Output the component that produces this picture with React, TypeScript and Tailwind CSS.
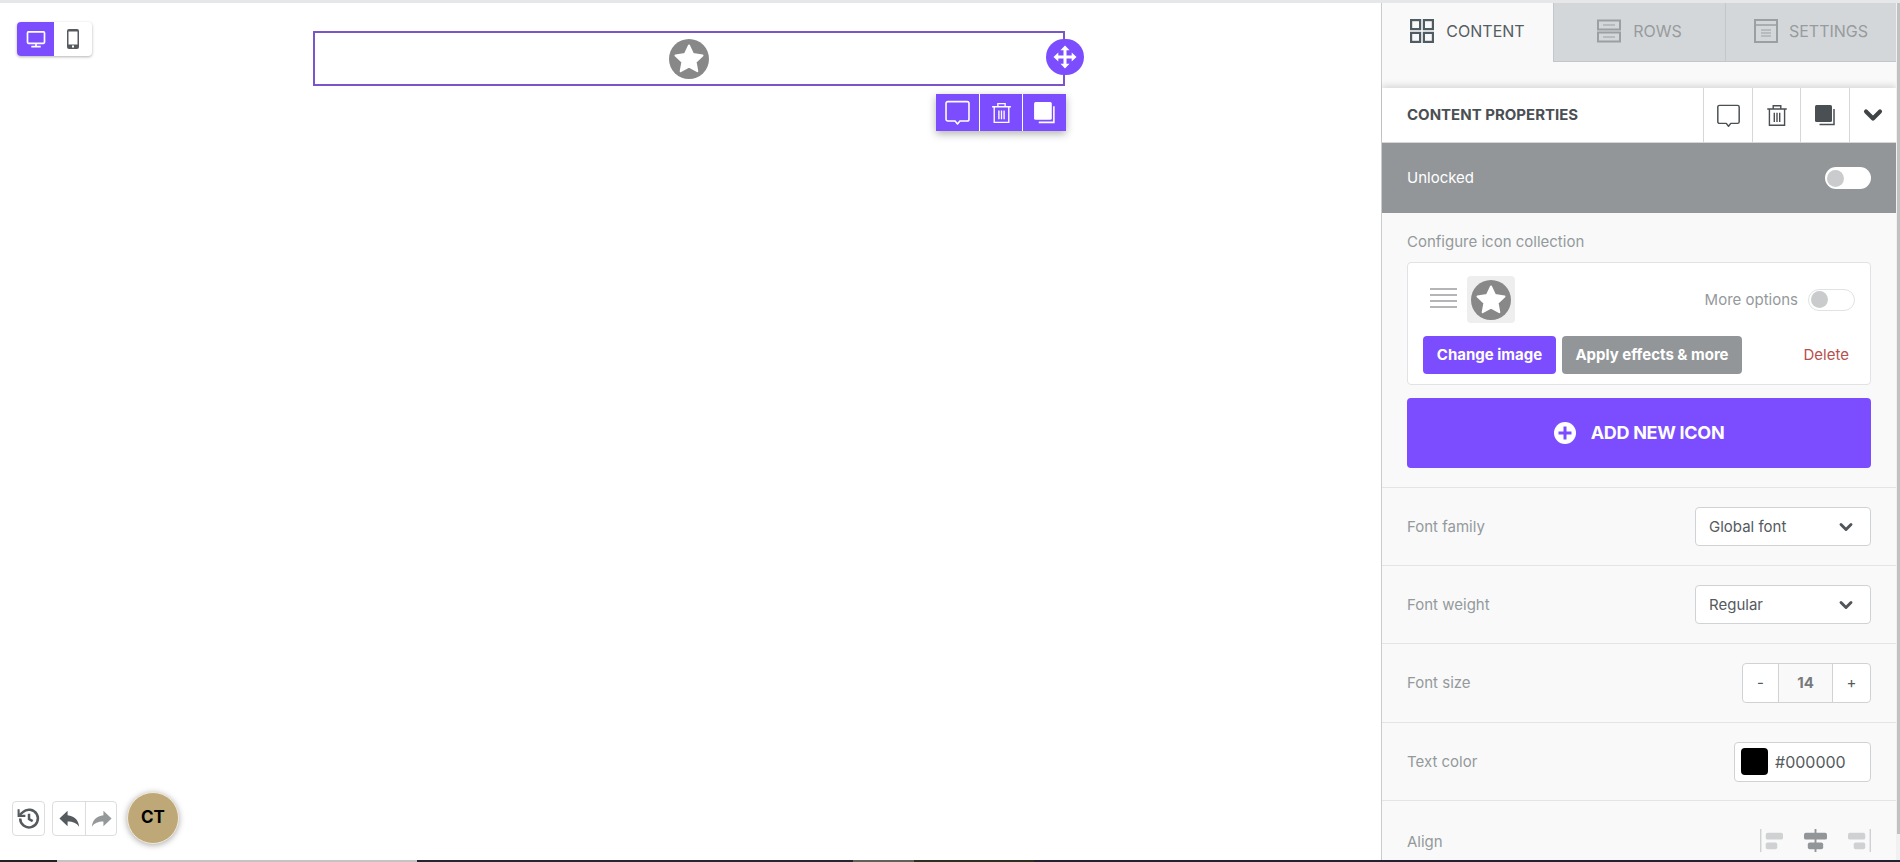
import { ChevronDown } from 'lucide-react';

const Comment = ({ className }: { className?: string }) => (
  <svg viewBox="0 0 24 24" className={className} fill="none" stroke="currentColor" strokeWidth="1.3">
    <path d="M4 3h16a1.500 1.500 0 0 1 1.500 1.500v13a1.500 1.500 0 0 1-1.500 1.500h-6L12 21.500 10 19H4a1.500 1.500 0 0 1-1.500-1.500v-13A1.500 1.500 0 0 1 4 3z" strokeLinejoin="round" />
  </svg>
);

const Trash = ({ className }: { className?: string }) => (
  <svg viewBox="0 0 24 24" className={className} fill="none" stroke="currentColor" strokeWidth="1.3">
    <path d="M3 6.500h18M8.500 6.500V3.500h7v3M5 6.500h14V21.500H5zM9.500 10v8.500M12 10v8.500M14.500 10v8.500" />
  </svg>
);

const Duplicate = ({ className }: { className?: string }) => (
  <svg viewBox="0 0 24 24" className={className} fill="none">
    <rect x="2" y="2" width="17" height="17" rx="1.500" fill="currentColor" />
    <path d="M21 6v15.500H6.500" stroke="currentColor" strokeWidth="1.500" />
  </svg>
);

const StarBadge = ({ className }: { className?: string }) => (
  <svg viewBox="0 0 40 40" className={className}>
    <circle cx="20" cy="20" r="20" fill="#888888" />
    <path
      d="M20 6.500l4.100 8.600 9.400 1.300-6.900 6.500 1.700 9.300-8.300-4.500-8.300 4.500 1.700-9.300-6.900-6.500 9.400-1.300z"
      fill="#fff"
      stroke="#fff"
      strokeWidth="2"
      strokeLinejoin="round"
    />
  </svg>
);

const Move = () => (
  <svg viewBox="0 0 24 24" className="h-6 w-6" fill="#fff">
    <path d="M12 0.500l4.500 4.800h-3v5.200h5.200v-3l4.800 4.500-4.800 4.500v-3h-5.200v5.200h3L12 23.500l-4.500-4.800h3v-5.200H5.300v3L0.500 12l4.800-4.500v3h5.200V5.300h-3z" />
  </svg>
);

function Toggle({ track, knob, wide }: { track: string; knob: string; wide?: boolean }) {
  return (
    <span className={`flex h-[22px] items-center rounded-full px-[2px] ${wide ? 'w-[47px]' : 'w-[46px]'} ${track}`}>
      <span className={`h-[17px] w-[17px] rounded-full ${knob}`} />
    </span>
  );
}

function Row({ label, height, children }: { label: string; height: string; children: React.ReactNode }) {
  return (
    <div className={`flex items-center justify-between border-b border-[#e2e4e5] pl-[25px] pr-[25px] ${height}`}>
      <span className="mt-[1px] text-[15px] text-[#94999c]">{label}</span>
      {children}
    </div>
  );
}

function SelectBox({ value }: { value: string }) {
  return (
    <div className="flex h-[39px] w-[176px] items-center justify-between rounded border border-[#d0d3d4] bg-white pl-[13px] pr-[14px] text-[15px] text-[#555a5e]">
      <span className="mt-[1px]">{value}</span>
      <ChevronDown className="h-[20px] w-[20px] text-[#505559]" strokeWidth={3.500} />
    </div>
  );
}

function TabIcon({ kind }: { kind: 'content' | 'rows' | 'settings' }) {
  if (kind === 'content') {
    return (
      <svg viewBox="0 0 24 24" className="h-6 w-6" fill="none" stroke="#505c63" strokeWidth="2.200">
        <rect x="1.100" y="1.100" width="9" height="9" />
        <rect x="13.900" y="1.100" width="9" height="9" />
        <rect x="1.100" y="13.900" width="9" height="9" />
        <rect x="13.900" y="13.900" width="9" height="9" />
      </svg>
    );
  }
  if (kind === 'rows') {
    return (
      <svg viewBox="0 0 24 24" className="h-6 w-6" fill="none" stroke="#9a9fa2" strokeWidth="2">
        <rect x="1" y="1.500" width="22" height="9" />
        <rect x="1" y="13.500" width="22" height="9" />
        <path d="M6 6h12M6 18h12" strokeWidth="1" />
      </svg>
    );
  }
  return (
    <svg viewBox="0 0 24 24" className="h-6 w-6" fill="none" stroke="#9a9fa2" strokeWidth="2">
      <rect x="1" y="1" width="22" height="22" />
      <path d="M1 6h22" strokeWidth="1.500" />
      <path d="M7 11h10M7 14h10M7 17h10" strokeWidth="1" />
    </svg>
  );
}

function AlignIcon({ kind, color }: { kind: 'left' | 'center' | 'right'; color: string }) {
  return (
    <svg viewBox="0 0 24 24" className="h-[23px] w-[23px]" fill={color}>
      {kind === 'left' && (
        <>
          <rect x="0" y="0" width="1.500" height="24" />
          <rect x="6" y="4" width="18" height="7" rx="2" />
          <rect x="6" y="14" width="12" height="7" rx="2" />
        </>
      )}
      {kind === 'center' && (
        <>
          <rect x="11" y="0" width="2" height="24" />
          <rect x="0" y="4" width="24" height="7" rx="2" />
          <rect x="4" y="14" width="16" height="7" rx="2" />
        </>
      )}
      {kind === 'right' && (
        <>
          <rect x="22.500" y="0" width="1.500" height="24" />
          <rect x="0" y="4" width="18" height="7" rx="2" />
          <rect x="6" y="14" width="12" height="7" rx="2" />
        </>
      )}
    </svg>
  );
}

export default function App() {
  return (
    <div className="flex h-[862px] w-[1900px] flex-col overflow-hidden bg-white font-['Inter',sans-serif]">
      <div className="h-[3px] shrink-0 bg-[#e6e7e8]" />
      <div className="flex min-h-0 flex-1">
        {/* canvas */}
        <div className="relative flex-1 bg-white">
          <div className="absolute left-[17px] top-[19px] flex h-[34px] w-[75px] overflow-hidden rounded-sm bg-white shadow-[0_1px_3px_rgba(0,0,0,0.3)]">
            <div className="flex w-[37px] items-center justify-center bg-[#7c4dff]">
              <svg viewBox="0 0 20 18" className="h-[17px] w-[20px]" fill="none" stroke="#fff" strokeWidth="1.800">
                <rect x="1" y="1" width="18" height="12" rx="1" />
                <path d="M10 13v3M5 16.500h10" />
              </svg>
            </div>
            <div className="flex flex-1 items-center justify-center">
              <svg viewBox="0 0 12 20" className="h-[20px] w-[12px]">
                <rect width="12" height="20" rx="2" fill="#555a5e" />
                <rect x="1.500" y="2.500" width="9" height="13" fill="#fff" />
                <rect x="5" y="16.500" width="2" height="2" fill="#fff" />
              </svg>
            </div>
          </div>

          <div className="absolute left-[313px] top-[28px] flex h-[55px] w-[752px] items-center justify-center border-2 border-[#7a55c9]">
            <StarBadge className="h-10 w-10" />
            <div className="absolute right-[-21px] top-[6px] flex h-[36px] w-[38px] items-center justify-center rounded-full bg-[#7c4dff]">
              <Move />
            </div>
          </div>

          <div className="absolute left-[936px] top-[91px] flex h-[37px] w-[130px] bg-[#7c4dff] text-white shadow-[0_3px_8px_rgba(0,0,0,0.3)]">
            <div className="flex w-[44px] items-center justify-center border-r border-white">
              <Comment className="h-[29px] w-[29px]" />
            </div>
            <div className="flex w-[43px] items-center justify-center border-r border-white">
              <Trash className="h-[25px] w-[25px]" />
            </div>
            <div className="flex flex-1 items-center justify-center">
              <Duplicate className="h-[25px] w-[25px]" />
            </div>
          </div>

          <div className="absolute bottom-[16px] left-[12px] flex items-center">
            <div className="flex h-[35px] w-[33px] items-center justify-center rounded border border-[#dcdddf] bg-white">
              <svg viewBox="0 0 24 24" className="h-[25px] w-[25px]" fill="none" stroke="#555a5e" strokeWidth="2.400">
                <path d="M4 12a8.500 8.500 0 1 0 2.600-6.100L3.500 8.500" />
                <path d="M2.500 3v6.500H9" strokeWidth="2" />
                <path d="M12.500 7.500v5l3.500 2" />
              </svg>
            </div>
            <div className="ml-[7px] flex h-[35px] w-[65px] rounded border border-[#dcdddf] bg-white">
              <div className="flex w-[33px] items-center justify-center border-r border-[#dcdddf]">
                <svg viewBox="0 0 24 24" className="h-[23px] w-[23px]" fill="#555a5e">
                  <path d="M10 4v4.500c7 .8 11.500 5 12 12-2.500-4-6.500-5.500-12-5.500V20L1.500 12z" />
                </svg>
              </div>
              <div className="flex flex-1 items-center justify-center">
                <svg viewBox="0 0 24 24" className="h-[23px] w-[23px]" fill="#949899">
                  <path d="M14 4v4.500c-7 .8-11.500 5-12 12 2.500-4 6.500-5.500 12-5.500V20l8.500-8z" />
                </svg>
              </div>
            </div>
            <div className="ml-[10px] flex h-[52px] w-[52px] items-center justify-center rounded-full border border-[#f3ead8] bg-[#bfa878] text-[17px] font-bold text-black shadow-[0_1px_6px_rgba(0,0,0,0.35)]">
              CT
            </div>
          </div>
        </div>

        {/* right panel */}
        <div className="flex w-[515px] shrink-0 flex-col border-l border-[#c9cbcc] bg-[#f9f9f9]">
          <div className="flex h-[59px] shrink-0">
            <div className="flex w-[171px] items-center justify-center gap-[12px] pb-[3px] text-[16px] text-[#555d62]">
              <TabIcon kind="content" />
              CONTENT
            </div>
            <div className="flex w-[172px] items-center justify-center gap-[12px] border-b border-l border-[#c3c7c9] bg-[#d4d7d9] pb-[3px] text-[16px] text-[#979b9e]">
              <TabIcon kind="rows" />
              ROWS
            </div>
            <div className="flex flex-1 items-center justify-center gap-[11px] border-b border-l border-[#c3c7c9] bg-[#d4d7d9] pb-[3px] text-[16px] text-[#979b9e]">
              <TabIcon kind="settings" />
              SETTINGS
            </div>
          </div>

          <div className="h-[26px] shrink-0" />

          <div className="flex h-[55px] shrink-0 items-center border-b border-[#d5d7d8] bg-white pl-[25px] shadow-[0_-3px_6px_rgba(0,0,0,0.12)]">
            <span className="mt-[1px] flex-1 text-[15px] font-bold text-[#4a4f53]">CONTENT PROPERTIES</span>
            <div className="flex h-full w-[49px] items-center justify-center border-l border-[#d5d7d8] text-[#4a4f53]">
              <Comment className="h-[27px] w-[27px]" />
            </div>
            <div className="flex h-full w-[48px] items-center justify-center border-l border-[#d5d7d8] text-[#4a4f53]">
              <Trash className="h-[26px] w-[26px]" />
            </div>
            <div className="flex h-full w-[49px] items-center justify-center border-l border-[#d5d7d8] text-[#4a4f53]">
              <Duplicate className="h-[24px] w-[24px]" />
            </div>
            <div className="flex h-full w-[47px] items-center justify-center border-l border-[#d5d7d8] text-[#3f4447]">
              <ChevronDown className="h-[28px] w-[28px]" strokeWidth={3.500} />
            </div>
          </div>

          <div className="flex h-[70px] shrink-0 items-center justify-between bg-[#929698] pl-[25px] pr-[25px]">
            <span className="mt-[1px] text-[15px] text-white">Unlocked</span>
            <Toggle track="bg-white" knob="bg-[#c9cbcc]" />
          </div>

          <div className="shrink-0 border-b border-[#e2e4e5] pb-[19px] pl-[25px] pr-[25px] pt-[20px]">
            <div className="text-[15px] leading-[17px] text-[#94999c]">Configure icon collection</div>
            <div className="mt-[12px] h-[123px] rounded border border-[#e0e2e3] bg-white pl-[15px] pr-[15px] pt-[13px]">
              <div className="flex h-[47px] items-center">
                <div className="mb-[3px] ml-[7px] flex w-[27px] flex-col gap-[4px]">
                  <span className="h-[2px] bg-[#b3b5b6]" />
                  <span className="h-[2px] bg-[#b3b5b6]" />
                  <span className="h-[2px] bg-[#b3b5b6]" />
                  <span className="h-[2px] bg-[#b3b5b6]" />
                </div>
                <div className="ml-[10px] flex h-[47px] w-[48px] items-center justify-center rounded bg-[#eeeeee]">
                  <StarBadge className="h-10 w-10" />
                </div>
                <span className="ml-auto mr-[10px] mt-[1px] text-[15px] text-[#94999c]">More options</span>
                <Toggle wide track="border border-[#e0e2e3] bg-white" knob="bg-[#c9cbcc]" />
              </div>
              <div className="mt-[13px] flex items-center">
                <div className="flex h-[38px] w-[133px] items-center justify-center rounded bg-[#7c4dff] text-[15px] font-bold text-white">
                  Change image
                </div>
                <div className="ml-[6px] flex h-[38px] w-[180px] items-center justify-center rounded bg-[#929698] text-[15px] font-bold text-white">
                  Apply effects &amp; more
                </div>
                <span className="ml-auto mr-[6px] text-[15px] text-[#b84f4c]">Delete</span>
              </div>
            </div>
            <div className="mt-[13px] flex h-[70px] items-center justify-center gap-[15px] rounded bg-[#7c4dff] text-[18px] font-bold tracking-[-0.3px] text-white">
              <svg viewBox="0 0 22 22" className="h-[22px] w-[22px]">
                <circle cx="11" cy="11" r="11" fill="#fff" />
                <path d="M11 4.500v13M4.500 11h13" stroke="#7c4dff" strokeWidth="3" />
              </svg>
              <span className="mb-[2px]">ADD NEW ICON</span>
            </div>
          </div>

          <Row label="Font family" height="h-[78px] shrink-0">
            <SelectBox value="Global font" />
          </Row>
          <Row label="Font weight" height="h-[78px] shrink-0">
            <SelectBox value="Regular" />
          </Row>
          <Row label="Font size" height="h-[79px] shrink-0">
            <div className="flex h-[40px] w-[129px] rounded border border-[#d0d3d4] bg-white text-[#555a5e]">
              <span className="flex w-[36px] items-center justify-center border-r border-[#d0d3d4] text-[15px]">-</span>
              <span className="flex flex-1 items-center justify-center border-r border-[#d0d3d4] bg-[#f9f9f9] text-[15px] font-bold text-[#777b7e]">
                14
              </span>
              <span className="flex w-[37px] items-center justify-center text-[15px]">+</span>
            </div>
          </Row>
          <Row label="Text color" height="h-[78px] shrink-0">
            <div className="flex h-[40px] w-[137px] items-center rounded border border-[#d0d3d4] bg-white pl-[6px] text-[16px] text-[#555a5e]">
              <span className="h-[27px] w-[27px] rounded bg-black" />
              <span className="ml-[7px]">#000000</span>
            </div>
          </Row>
          <div className="flex flex-1 items-start justify-between pl-[25px] pr-[25px] pt-[28px]">
            <span className="mt-[2px] text-[15px] text-[#94999c]">Align</span>
            <div className="flex items-center gap-[21px]">
              <AlignIcon kind="left" color="#cfd1d2" />
              <AlignIcon kind="center" color="#929698" />
              <AlignIcon kind="right" color="#cfd1d2" />
            </div>
          </div>
        </div>

        {/* scrollbar */}
        <div className="w-[4px] shrink-0 bg-[#f1f1f1] pl-[1px]">
          <div className="h-[831px] bg-[#c1c1c1]" />
        </div>
      </div>
      <div className="flex h-[2px] shrink-0">
        <div className="w-[57px] bg-[#222226]" />
        <div className="w-[360px] bg-[#c4c4c4]" />
        <div className="w-[436px] bg-[#23252f]" />
        <div className="w-[61px] bg-[#5e6458]" />
        <div className="w-[120px] bg-[#2b3020]" />
        <div className="flex-1 bg-[#23232f]" />
      </div>
    </div>
  );
}
